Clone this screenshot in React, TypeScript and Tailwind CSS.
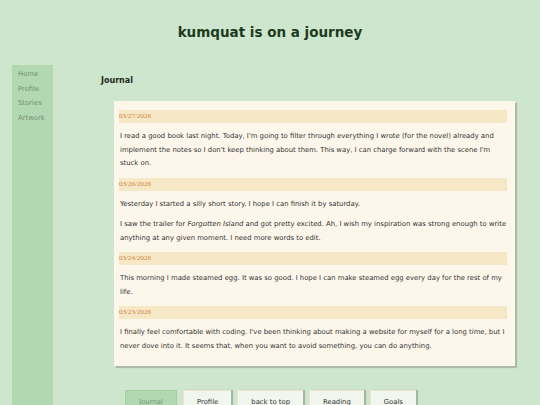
import React from "react";

const entries = [
  {
    date: "03/27/2026",
    paras: [
      <>I read a good book last night. Today, I'm going to filter through everything I wrote (for the novel) already and implement the notes so I don't keep thinking about them. This way, I can charge forward with the scene I'm stuck on.</>,
    ],
  },
  {
    date: "03/26/2026",
    paras: [
      <>Yesterday I started a silly short story. I hope I can finish it by saturday.</>,
      <>I saw the trailer for <i>Forgotten Island</i> and got pretty excited. Ah, I wish my inspiration was strong enough to write anything at any given moment. I need more words to edit.</>,
    ],
  },
  {
    date: "03/24/2026",
    paras: [<>This morning I made steamed egg. It was so good. I hope I can make steamed egg every day for the rest of my life.</>],
  },
  {
    date: "03/23/2026",
    paras: [<>I finally feel comfortable with coding. I've been thinking about making a website for myself for a long time, but I never dove into it. It seems that, when you want to avoid something, you can do anything.</>],
  },
];

const buttons = ["Journal", "Profile", "back to top", "Reading", "Goals"];

export default function App() {
  return (
    <div className="w-[540px] h-[405px] overflow-hidden bg-[#cee6ce] font-['DejaVu_Sans',sans-serif]">
      <h1 className="pt-[23px] h-[65px] text-center text-[13.5px] font-bold text-[#1d3a1d] leading-[18px]">
        kumquat is on a journey
      </h1>
      <div className="flex">
        <nav className="ml-[12px] w-[41px] h-[340px] bg-[#b1d8b1] pt-[2px] pl-[6px] flex flex-col text-[6.85px] text-[#768f76] leading-[14.5px]">
          <span>Home</span>
          <span>Profile</span>
          <span>Stories</span>
          <span>Artwork</span>
        </nav>
        <main className="ml-[48px] flex flex-col">
          <h2 className="mt-[11px] h-[25px] text-[8px] font-bold text-[#1d2a1d] leading-[10px]">Journal</h2>
          <div className="ml-[13px] w-[401px] bg-[#fcf7ea] shadow-[2px_2px_1px_rgba(0,0,0,0.18)] pt-[9px] pb-[13px] pl-[5px] pr-[8px] flex flex-col">
            {entries.map((e, i) => (
              <div key={i} className={i > 0 ? "mt-[7px] flex flex-col" : "flex flex-col"}>
                <div className="h-[13px] bg-[#f6e8c4] text-[7px] text-[#cf8549] leading-[13px] font-['Liberation_Serif',serif]">
                  {e.date}
                </div>
                {e.paras.map((p, j) => (
                  <p key={j} className="mt-[7px] pl-[1px] text-[6.85px] leading-[13.5px] text-[#333]">
                    {p}
                  </p>
                ))}
              </div>
            ))}
          </div>
          <div className="mt-[24px] ml-[24px] flex gap-[6px]">
            {buttons.map((b, i) => (
              <div
                key={b}
                className={
                  i === 0
                    ? "h-[20px] w-[52px] bg-[#b1d8b1] border border-[#a7cda7] text-[#6f9a6f] text-[6.85px] text-center pt-[6px]"
                    : "h-[20px] bg-[#f1f6ee] border-t border-l border-[#ece6cf] shadow-[2px_0_1px_rgba(0,0,0,0.2)] text-[#333] text-[6.85px] text-center pt-[6px] px-[13px]"
                }
              >
                <span className={i === 0 ? "" : "underline decoration-dotted decoration-[#999]"}>{b}</span>
              </div>
            ))}
          </div>
        </main>
      </div>
    </div>
  );
}
